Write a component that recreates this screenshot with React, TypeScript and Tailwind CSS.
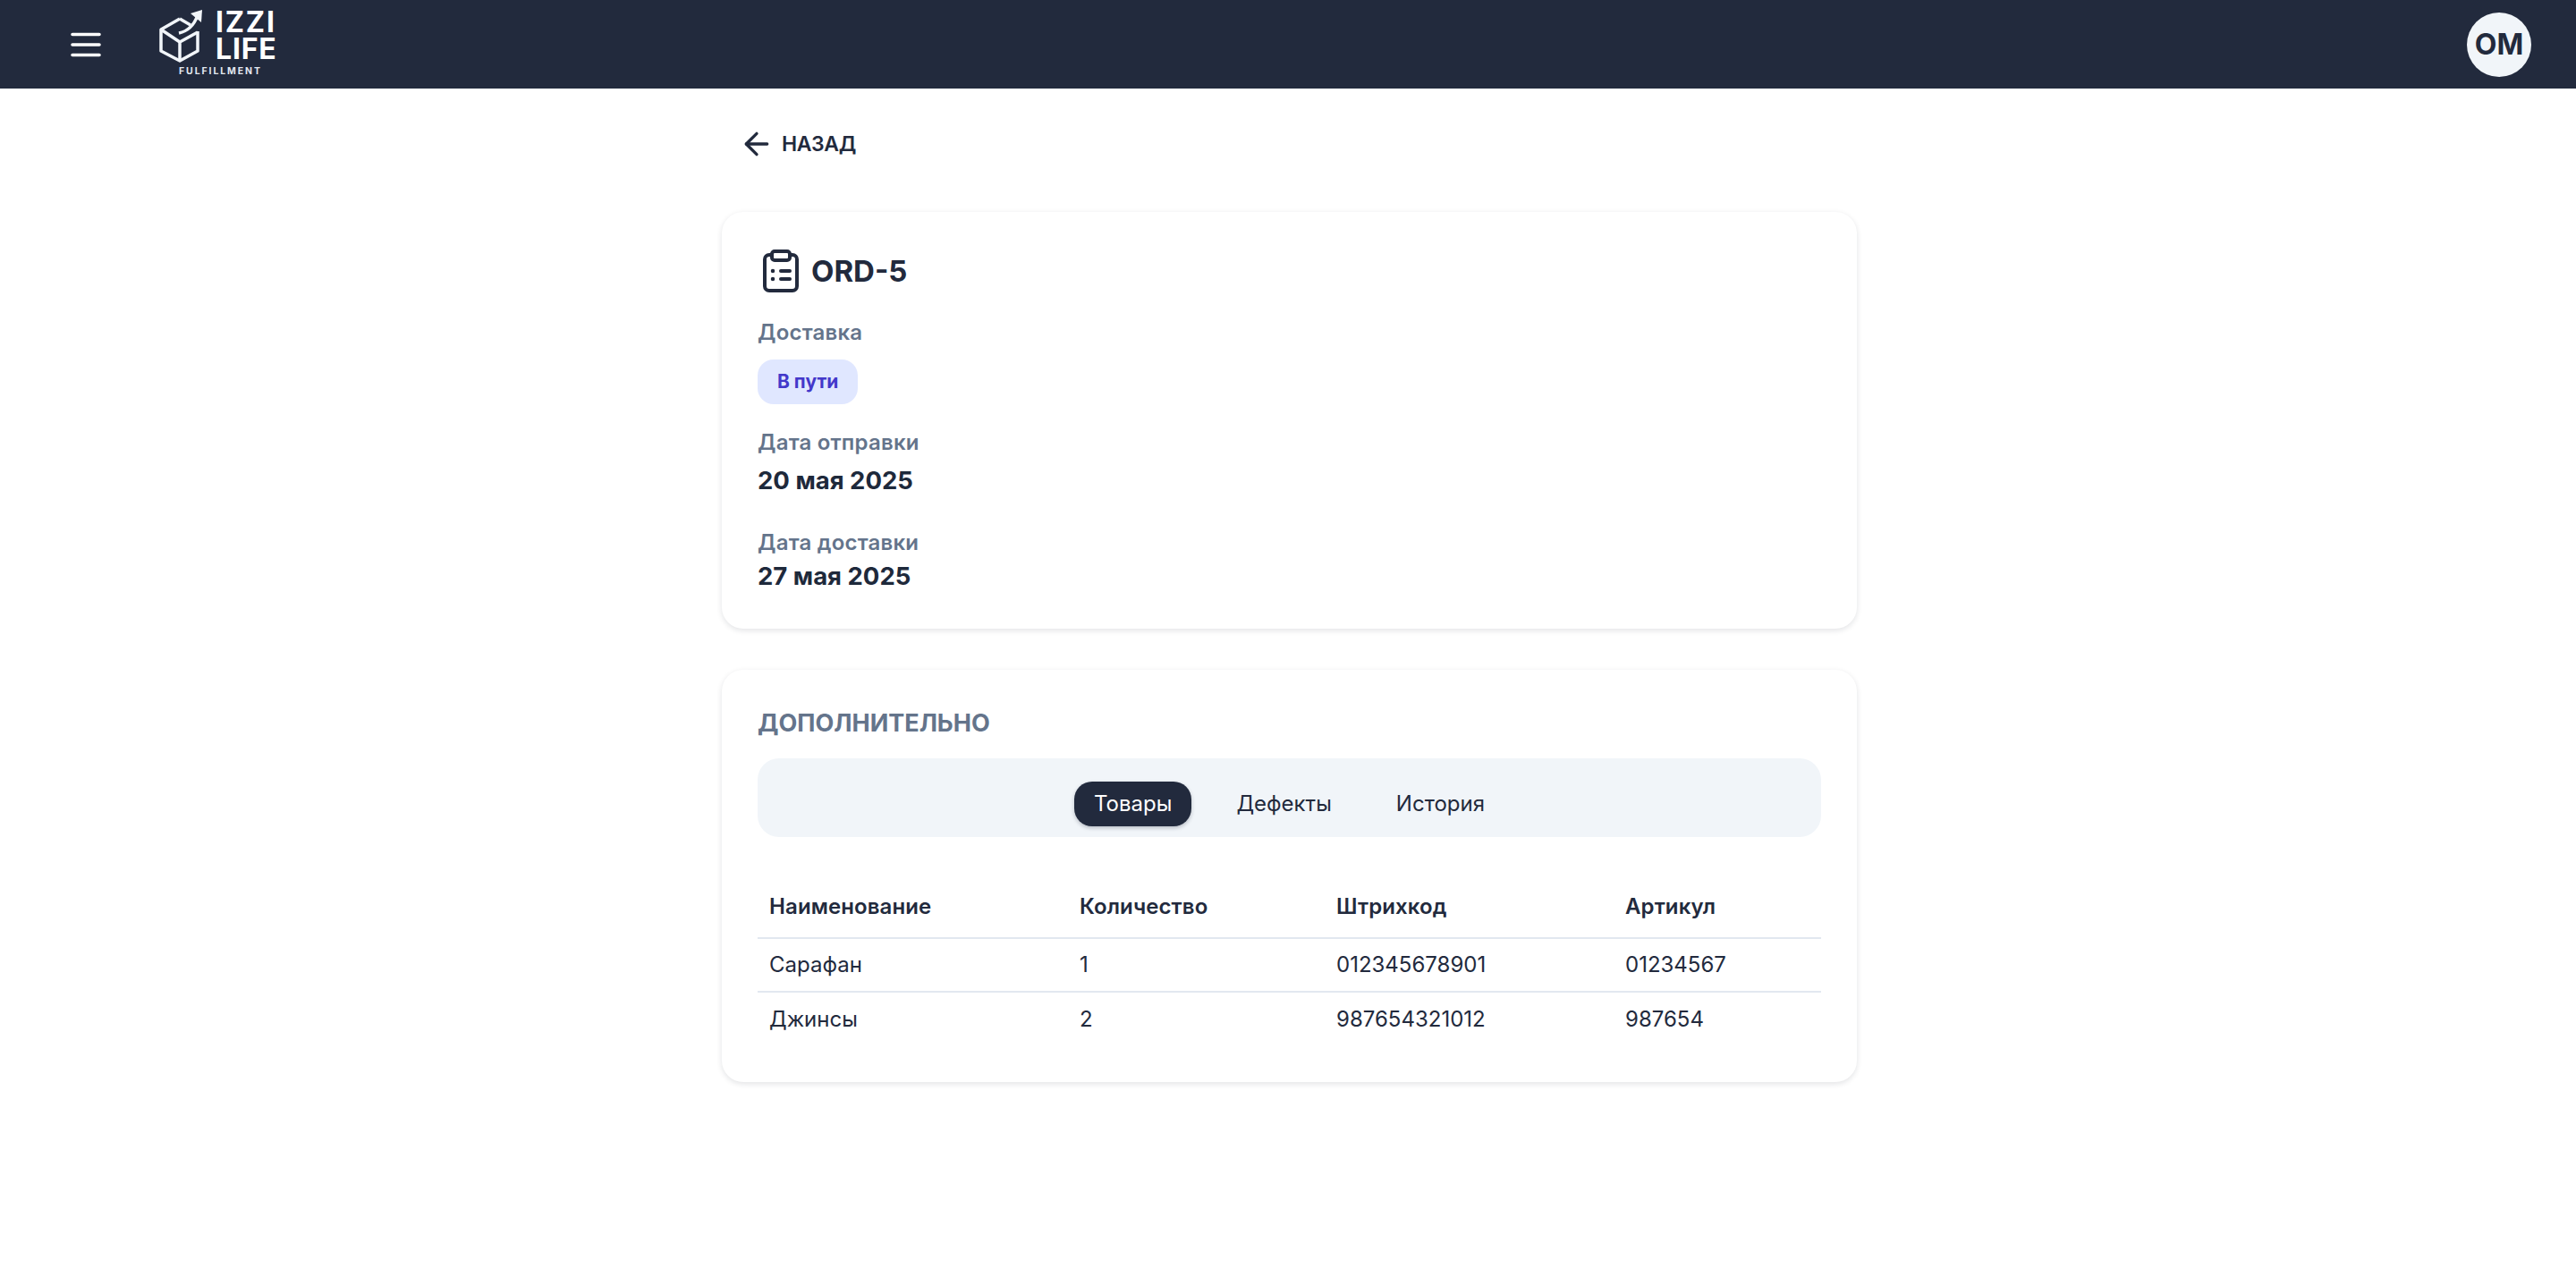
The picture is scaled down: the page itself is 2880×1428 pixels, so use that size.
import { ArrowLeft } from 'lucide-react'

const items = [
  { name: 'Сарафан', qty: '1', barcode: '012345678901', sku: '01234567' },
  { name: 'Джинсы', qty: '2', barcode: '987654321012', sku: '987654' },
]

function Logo() {
  return (
    <div className="flex flex-col w-[132px] h-[99px]">
      <div className="flex items-start h-[72px] pt-[10px] w-full">
        <svg width="50" height="60" viewBox="0 0 50 60" fill="none" stroke="#f1f5f9" strokeWidth="3.5" strokeLinejoin="round" className="shrink-0">
          <path d="M23 11 L2 23 V47 L23 58 L43 47 V25" />
          <path d="M2 23 L23 37 L43 26 M23 37 V58" />
          <path d="M23 11 L35 18" />
          <path d="M22 27 C32 25 39 18 43 7" />
          <path d="M35 5 L48 1 L47 15 Z" fill="#f1f5f9" stroke="none" />
        </svg>
        <div className="ml-[13px] flex flex-col font-bold text-white text-[32px] leading-[30px]">
          <span className="tracking-[1.8px]">IZZI</span>
          <span className="tracking-[0.8px]">LIFE</span>
        </div>
      </div>
      <span className="font-bold text-[#e2e8f0] text-[10.5px] leading-[12px] tracking-[1.9px] ml-[22px] mt-[2px]">FULFILLMENT</span>
    </div>
  )
}

export default function App() {
  return (
    <div className="min-h-[1428px] bg-white font-['Inter',sans-serif]">
      {/* Header */}
      <header className="h-[99px] bg-[#222a3d] flex items-center justify-between pl-[79px] pr-[50px]">
        <div className="flex items-center gap-[65px]">
          <svg width="34" height="28" viewBox="0 0 34 28" fill="none" stroke="#fff" strokeWidth="3.6" strokeLinecap="round">
            <path d="M2 2.5H32M2 14H32M2 25.5H32" />
          </svg>
          <Logo />
        </div>
        <div className="w-[72px] h-[72px] rounded-full bg-[#f1f5f9] flex items-center justify-center text-[32px] font-bold text-[#222a3d]">
          OM
        </div>
      </header>

      <main className="w-[1269px] ml-[807px]">
        <button className="flex items-center gap-[8px] ml-[19px] mt-[42px] h-[40px] text-[23px] font-semibold tracking-[-0.4px] text-[#222a3d]">
          <ArrowLeft size={40} strokeWidth={2} />
          НАЗАД
        </button>

        {/* Order card */}
        <section className="mt-[56px] h-[466px] rounded-[24px] bg-white shadow-[0_2px_6px_rgba(15,23,42,0.12)] px-[40px] pt-[40px]">
          <div className="flex items-center gap-[14px] h-[52px] pl-[6px]">
            <svg width="40" height="48" viewBox="0 0 40 48" fill="none" stroke="#222a3d" strokeWidth="4" strokeLinecap="round" strokeLinejoin="round">
              <path d="M10 6H7a5 5 0 0 0-5 5v30a5 5 0 0 0 5 5h26a5 5 0 0 0 5-5V11a5 5 0 0 0-5-5h-3" />
              <rect x="10" y="2" width="20" height="10" rx="3" />
              <path d="M20 24h10M20 33h10" />
              <path d="M11 24h.01M11 33h.01" strokeWidth="4.5" />
            </svg>
            <h1 className="text-[33px] mt-[1px] font-bold text-[#222a3d]">ORD-5</h1>
          </div>
          <p className="mt-[25px] text-[24px] leading-[36px] font-semibold tracking-[0.2px] text-[#64748b]">Доставка</p>
          <span className="mt-[12px] flex w-fit items-center h-[50px] px-[22px] rounded-[18px] bg-[#e0e7ff] text-[21px] font-bold text-[#4338ca]">В пути</span>
          <p className="mt-[25px] text-[24px] leading-[36px] font-semibold tracking-[0.2px] text-[#64748b]">Дата отправки</p>
          <p className="text-[27.5px] leading-[48px] font-bold text-[#1e293b]">20 мая 2025</p>
          <p className="mt-[28px] text-[24px] leading-[36px] font-semibold tracking-[0.2px] text-[#64748b]">Дата доставки</p>
          <p className="mt-[1px] text-[27.5px] leading-[36px] font-bold text-[#1e293b]">27 мая 2025</p>
        </section>

        {/* Extra card */}
        <section className="mt-[46px] h-[461px] rounded-[24px] bg-white shadow-[0_2px_6px_rgba(15,23,42,0.12)] px-[40px] pt-[42px]">
          <h2 className="text-[27px] leading-[36px] font-bold text-[#64748b]">ДОПОЛНИТЕЛЬНО</h2>
          <div className="mt-[21px] h-[88px] rounded-[24px] bg-[#f1f5f9] flex items-start justify-center gap-[28px] pt-[26px]">
            <button className="h-[50px] px-[22px] rounded-[20px] bg-[#222a3d] text-white text-[24px] shadow-[0_2px_4px_rgba(15,23,42,0.25)]">Товары</button>
            <button className="h-[50px] px-[22px] text-[#222a3d] text-[24px]">Дефекты</button>
            <button className="h-[50px] px-[22px] text-[#222a3d] text-[24px]">История</button>
          </div>
          <table className="mt-[43px] w-full text-[24px] text-[#222a3d] table-fixed">
            <thead>
              <tr className="border-b-2 border-[#e2e8f0]">
                <th className="w-[347px] h-[70px] pl-[13px] text-left font-semibold tracking-[0.1px]">Наименование</th>
                <th className="w-[287px] text-left font-semibold tracking-[0.1px] pl-[13px]">Количество</th>
                <th className="w-[323px] text-left font-semibold tracking-[0.1px] pl-[13px]">Штрихкод</th>
                <th className="text-left font-semibold tracking-[0.1px] pl-[13px]">Артикул</th>
              </tr>
            </thead>
            <tbody>
              {items.map((item, i) => (
                <tr key={item.name} className={i === 0 ? 'border-b-2 border-[#e2e8f0]' : ''}>
                  <td className="h-[60px] pl-[13px]">{item.name}</td>
                  <td className="pl-[13px]">{item.qty}</td>
                  <td className="pl-[13px]">{item.barcode}</td>
                  <td className="pl-[13px]">{item.sku}</td>
                </tr>
              ))}
            </tbody>
          </table>
        </section>
      </main>
    </div>
  )
}
